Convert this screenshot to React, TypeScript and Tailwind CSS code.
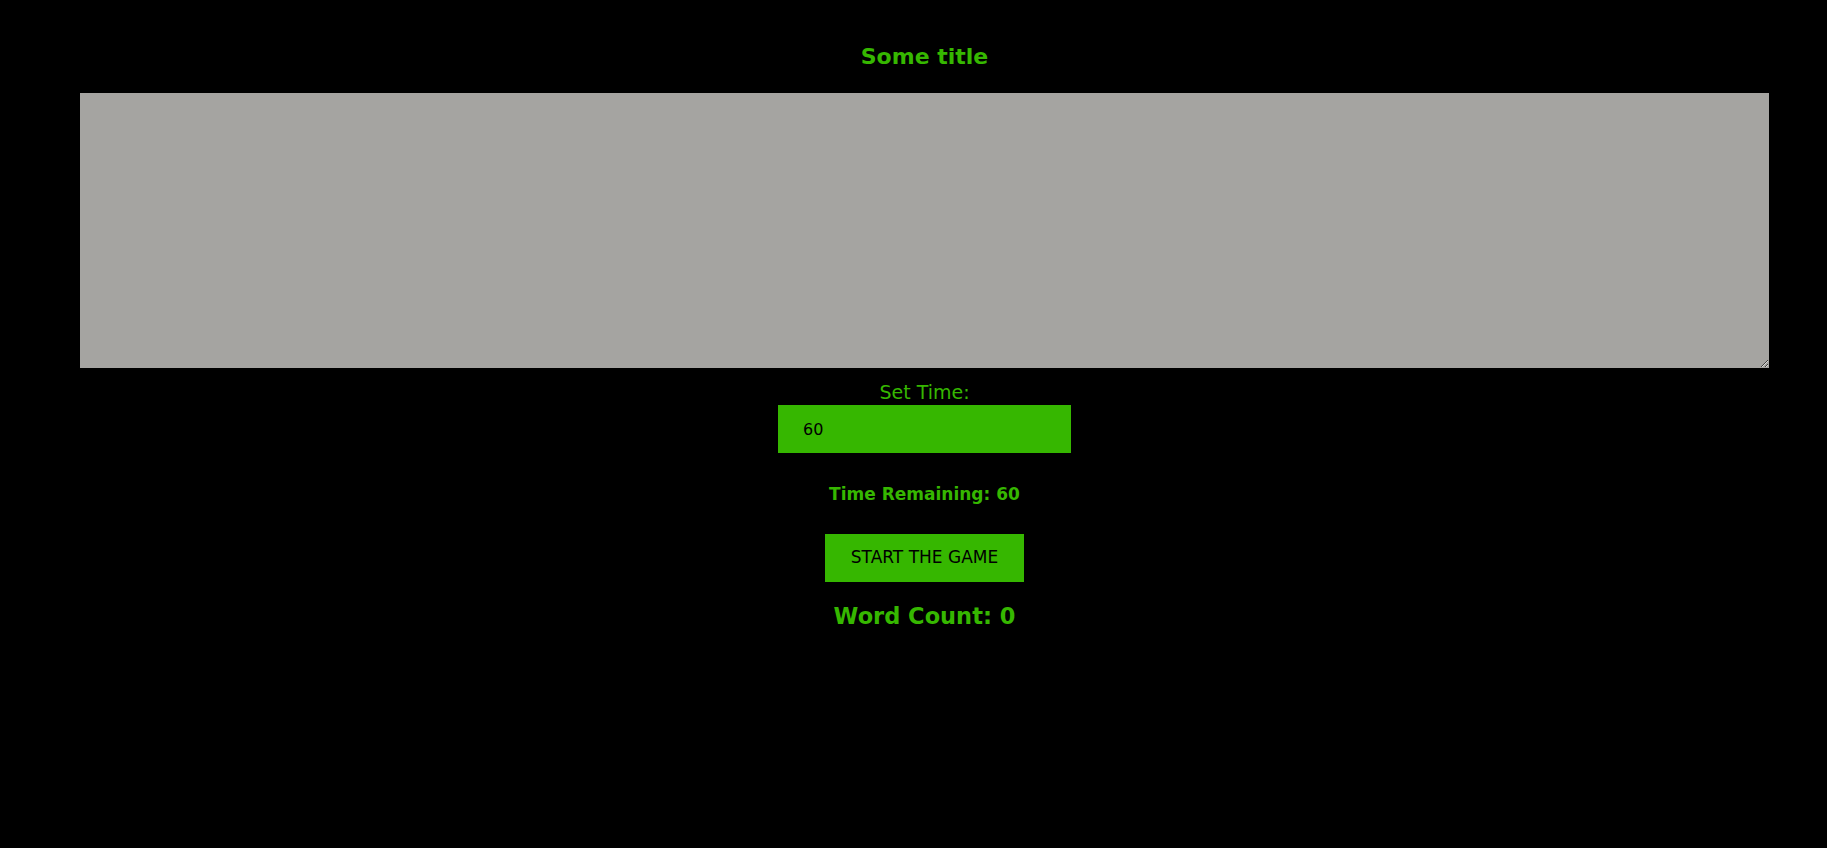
import React, { useState } from "react";

const font = { fontFamily: '"Comic Sans MS", "DejaVu Sans", sans-serif' };

export default function App() {
  const [time, setTime] = useState("60");
  return (
    <div className="min-h-screen w-full bg-black pl-[22px] flex flex-col items-center" style={font}>
      <h1 className="mt-[41px] text-[22px] leading-[32px] font-bold text-[#36b700]">Some title</h1>
      <textarea className="mt-[20px] w-[1689px] h-[275px] bg-[#a5a4a1] border-0 outline-none block" />
      <label className="mt-[12px] text-[19px] leading-[24px] text-[#36b700]">Set Time:</label>
      <input
        className="mt-[1px] w-[293px] h-[48px] bg-[#36b700] text-black pl-[25px] text-[16px] border-0 outline-none"
        value={time}
        onChange={(e) => setTime(e.target.value)}
      />
      <div className="mt-[27px] text-[17px] leading-[28px] font-bold text-[#36b700]">Time Remaining: 60</div>
      <button className="mt-[26px] w-[199px] h-[48px] bg-[#36b700] text-black text-[17px]">START THE GAME</button>
      <div className="mt-[16px] text-[22.5px] leading-[36px] font-bold text-[#36b700]">Word Count: 0</div>
    </div>
  );
}
